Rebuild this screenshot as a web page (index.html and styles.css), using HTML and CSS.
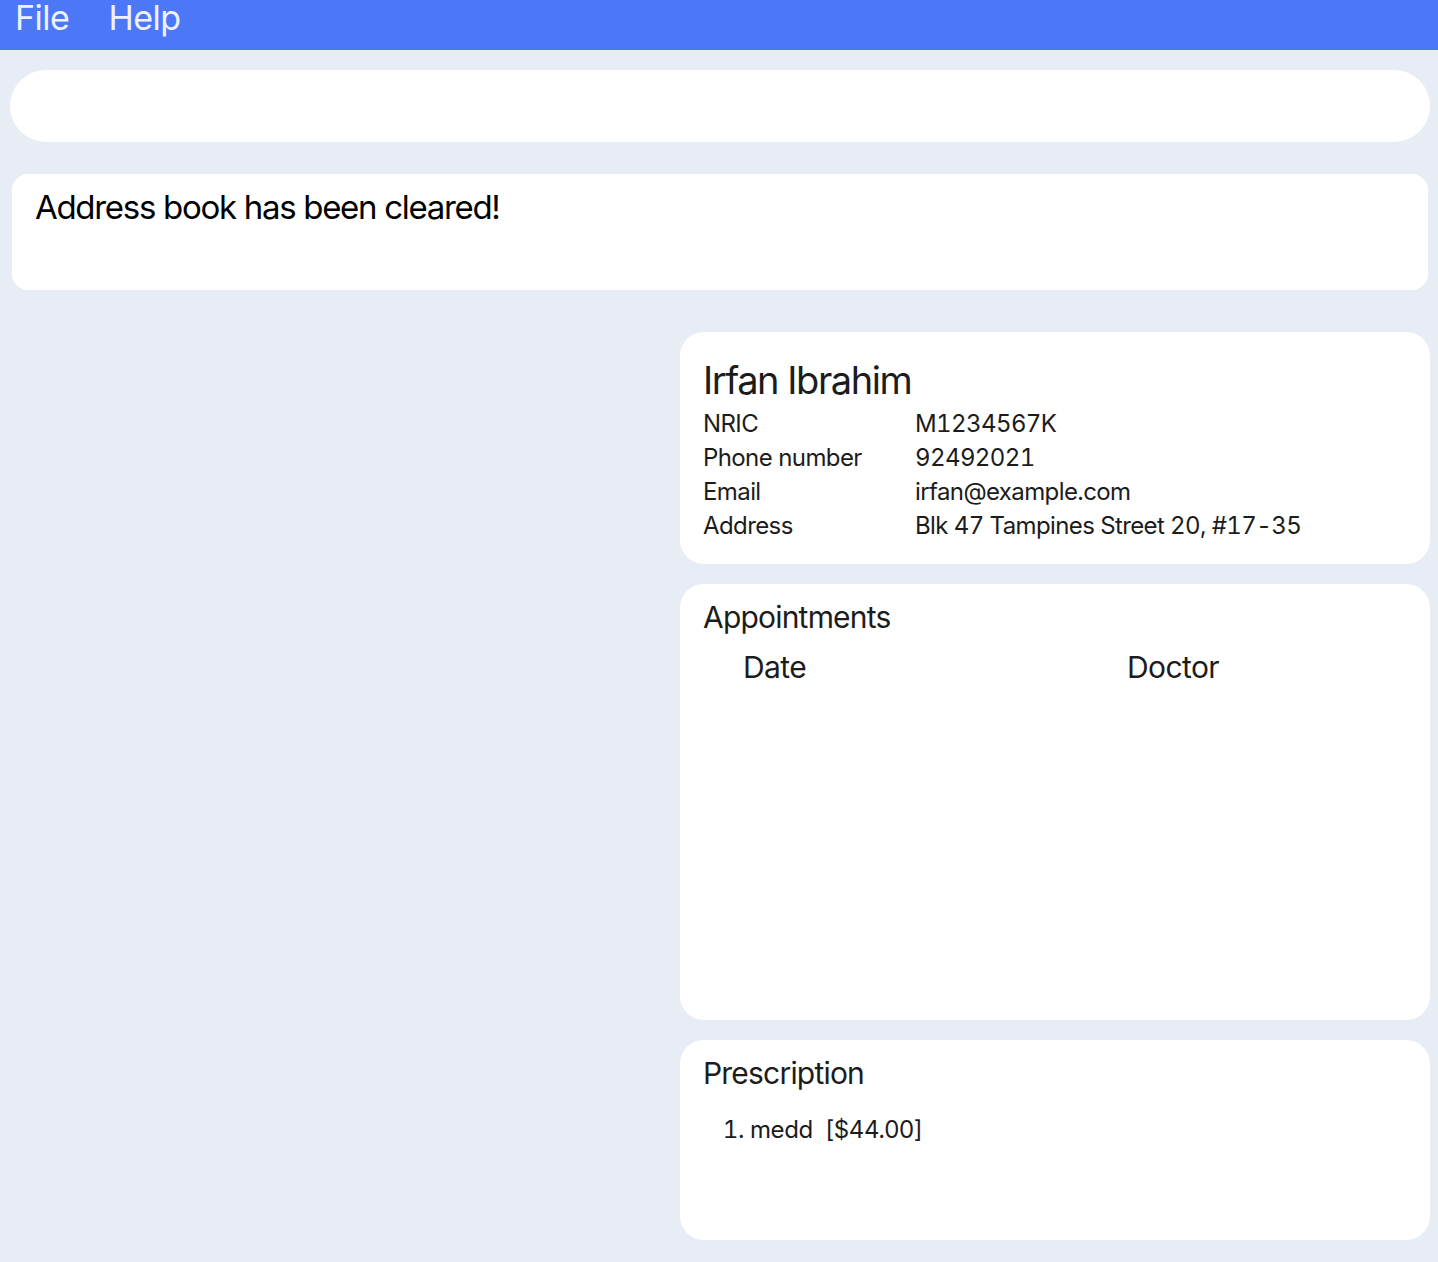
FILE: index.html
```html
<!DOCTYPE html>
<html>
<head>
<meta charset="utf-8">
<link rel="stylesheet" href="styles.css">
</head>
<body>
<div class="menubar">
  <span class="menu-item">File</span>
  <span class="menu-item">Help</span>
</div>
<div class="main">
  <div class="command-box"></div>
  <div class="result-box">Address book has been cleared!</div>
  <div class="content">
    <div class="list-pane"></div>
    <div class="detail-pane">
      <div class="card person-card">
        <div class="person-name">Irfan Ibrahim</div>
        <div class="fields">
          <div class="label">NRIC</div><div class="value">M1234567K</div>
          <div class="label">Phone number</div><div class="value">92492021</div>
          <div class="label">Email</div><div class="value">irfan@example.com</div>
          <div class="label">Address</div><div class="value">Blk 47 Tampines Street 20, #17-35</div>
        </div>
      </div>
      <div class="card appt-card">
        <div class="card-title">Appointments</div>
        <div class="appt-header">
          <div class="col-date">Date</div>
          <div class="col-doctor">Doctor</div>
        </div>
      </div>
      <div class="card presc-card">
        <div class="card-title">Prescription</div>
        <ol class="presc-list">
          <li>medd&nbsp; [$44.00]</li>
        </ol>
      </div>
    </div>
  </div>
</div>
</body>
</html>
```

FILE: styles.css
```css
html, body {
  margin: 0;
  padding: 0;
}
body {
  background: #e8ecf5;
  font-family: Inter, "Noto Sans", sans-serif;
  color: #1c1c1c;
  width: 1438px;
  height: 1262px;
  overflow: hidden;
}
.menubar {
  height: 50px;
  background: #4c77f6;
  display: flex;
  align-items: flex-start;
  padding-left: 15px;
  gap: 39px;
  box-sizing: border-box;
}
.menu-item {
  color: #eef1fd;
  font-size: 34px;
  line-height: 36px;
  font-weight: 400;
  letter-spacing: -0.5px;
}
.main {
  padding: 20px 8px 0 10px;
  display: flex;
  flex-direction: column;
}
.command-box {
  height: 72px;
  background: #fff;
  border-radius: 36px;
}
.result-box {
  margin: 32px 2px 0 2px;
  height: 116px;
  box-sizing: border-box;
  background: #fff;
  border-radius: 16px;
  padding: 13px 23px;
  font-size: 33px;
  line-height: 40px;
  color: #000;
  letter-spacing: -1.3px;
}
.content {
  margin-top: 42px;
  display: grid;
  grid-template-columns: 1fr 750px;
  gap: 0;
}
.detail-pane {
  display: flex;
  flex-direction: column;
  gap: 20px;
}
.card {
  background: #fff;
  border-radius: 24px;
  box-sizing: border-box;
  padding: 0 23px;
}
.person-card {
  height: 232px;
  padding-top: 26px;
}
.person-name {
  font-size: 38px;
  line-height: 44px;
  letter-spacing: -1.45px;
}
.fields {
  display: grid;
  grid-template-columns: 212px 1fr;
  font-size: 24px;
  line-height: 34px;
  letter-spacing: -0.6px;
  margin-top: 5px;
}
.value {
  font-feature-settings: "tnum" 1;
}
.appt-card {
  height: 436px;
  padding-top: 14px;
}
.card-title {
  font-size: 30px;
  line-height: 38px;
  letter-spacing: -0.8px;
}
.appt-header {
  display: flex;
  font-size: 30px;
  line-height: 38px;
  letter-spacing: -0.6px;
  margin-top: 12px;
  padding-left: 40px;
}
.col-date {
  width: 384px;
}
.presc-card {
  height: 200px;
  padding-top: 14px;
}
.presc-list {
  margin: 21px 0 0 0;
  padding-left: 47px;
  font-size: 24px;
  line-height: 34px;
  letter-spacing: -0.4px;
}
.presc-list li::marker {
  font-feature-settings: "tnum" 1;
}
```
